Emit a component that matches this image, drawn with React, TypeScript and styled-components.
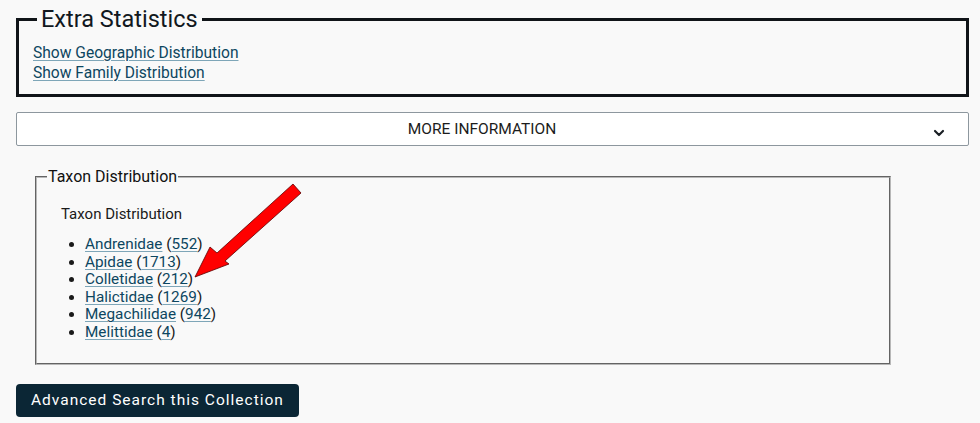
import React from "react";
import styled, { createGlobalStyle } from "styled-components";
import { ChevronDown } from "lucide-react";

const GlobalStyle = createGlobalStyle`
    html, body {
        margin: 0;
        padding: 0;
        background: #f9f9f9;
        font-family: Roboto, "Liberation Sans", Arial, sans-serif;
        color: #1a1a1a;
    }
`;

const families = [
    { name: "Andrenidae", count: 552 },
    { name: "Apidae", count: 1713 },
    { name: "Colletidae", count: 212 },
    { name: "Halictidae", count: 1269 },
    { name: "Megachilidae", count: 942 },
    { name: "Melittidae", count: 4 },
];

const App = () => {
    return (
        <Page>
            <GlobalStyle />
            <StatsBox>
                <StatsLegend>Extra Statistics</StatsLegend>
                <LinkStack>
                    <TextLink href="#">Show Geographic Distribution</TextLink>
                    <TextLink href="#">Show Family Distribution</TextLink>
                </LinkStack>
            </StatsBox>

            <MoreButton type="button">
                <span />
                <MoreLabel>MORE INFORMATION</MoreLabel>
                <Chevron>
                    <ChevronDown size={16} strokeWidth={3.2} />
                </Chevron>
            </MoreButton>

            <TaxonBox>
                <TaxonLegend>Taxon Distribution</TaxonLegend>
                <TaxonTitle>Taxon Distribution</TaxonTitle>
                <TaxonList>
                    {families.map((f) => (
                        <li key={f.name}>
                            <TextLink href="#">{f.name}</TextLink> (<TextLink href="#">{f.count}</TextLink>)
                        </li>
                    ))}
                </TaxonList>
            </TaxonBox>

            <SearchButton type="button">Advanced Search this Collection</SearchButton>

            <Arrow viewBox="0 0 980 423" width="980" height="423">
                <polygon
                    points="195,277 210,247 217,253 293,184 301,193 225,261 229,264"
                    fill="#ff0000"
                    stroke="#5a0000"
                    strokeWidth="0.8"
                />
            </Arrow>
        </Page>
    );
};

export default App;

const Page = styled.div`
    position: relative;
    width: 980px;
    height: 423px;
    box-sizing: border-box;
    padding: 5px 11px 0 16px;
    overflow: hidden;
`;

const StatsBox = styled.fieldset`
    margin: 0;
    padding: 10px 14px 11px;
    border: 3px solid #101418;
    min-width: 0;
`;

const StatsLegend = styled.legend`
    margin-left: 4px;
    padding: 0 4px;
    font-size: 23.5px;
    line-height: 28px;
    color: #111820;
`;

const LinkStack = styled.div`
    display: flex;
    flex-direction: column;
    align-items: flex-start;
    font-size: 15.6px;
    line-height: 20px;
`;

const TextLink = styled.a`
    color: #0d4660;
    text-decoration: underline;
    text-decoration-color: #7ea6b8;
    text-decoration-thickness: 1px;
    text-underline-offset: 2px;
`;

const MoreButton = styled.button`
    display: grid;
    grid-template-columns: 1fr auto 1fr;
    width: 100%;
    height: 34px;
    margin-top: 15px;
    padding: 0 21px 0 0;
    background: #ffffff;
    border: 1px solid #8d979e;
    border-radius: 2px;
    font-family: Roboto, "Liberation Sans", Arial, sans-serif;
    cursor: pointer;
`;

const MoreLabel = styled.span`
    align-self: center;
    font-size: 15.5px;
    color: #1c1c1c;
    padding-bottom: 1px;
`;

const Chevron = styled.span`
    justify-self: end;
    align-self: end;
    display: flex;
    color: #1a1f24;
    padding-bottom: 4px;
`;

const TaxonBox = styled.fieldset`
    width: 856px;
    box-sizing: border-box;
    margin: 21px 0 0 19px;
    padding: 0 10px 21px 10px;
    border: 2px groove #b8b8b8;
    min-width: 0;
`;

const TaxonLegend = styled.legend`
    padding: 0 1px;
    font-size: 16px;
    line-height: 19px;
    color: #111;
`;

const TaxonTitle = styled.div`
    margin-top: 19px;
    padding-left: 14px;
    font-size: 15px;
    color: #1a1a1a;
`;

const TaxonList = styled.ul`
    margin: 13px 0 0 0;
    padding-left: 38px;
    font-size: 15.3px;
    line-height: 17.6px;
    color: #1a1a1a;
`;

const SearchButton = styled.button`
    display: block;
    margin-top: 19px;
    height: 33px;
    padding: 0 15px;
    background: #0b2635;
    color: #ffffff;
    border: none;
    border-radius: 4px;
    font-family: Roboto, "Liberation Sans", Arial, sans-serif;
    font-size: 15.5px;
    letter-spacing: 1px;
    cursor: pointer;
`;

const Arrow = styled.svg`
    position: absolute;
    left: 0;
    top: 0;
    pointer-events: none;
`;
